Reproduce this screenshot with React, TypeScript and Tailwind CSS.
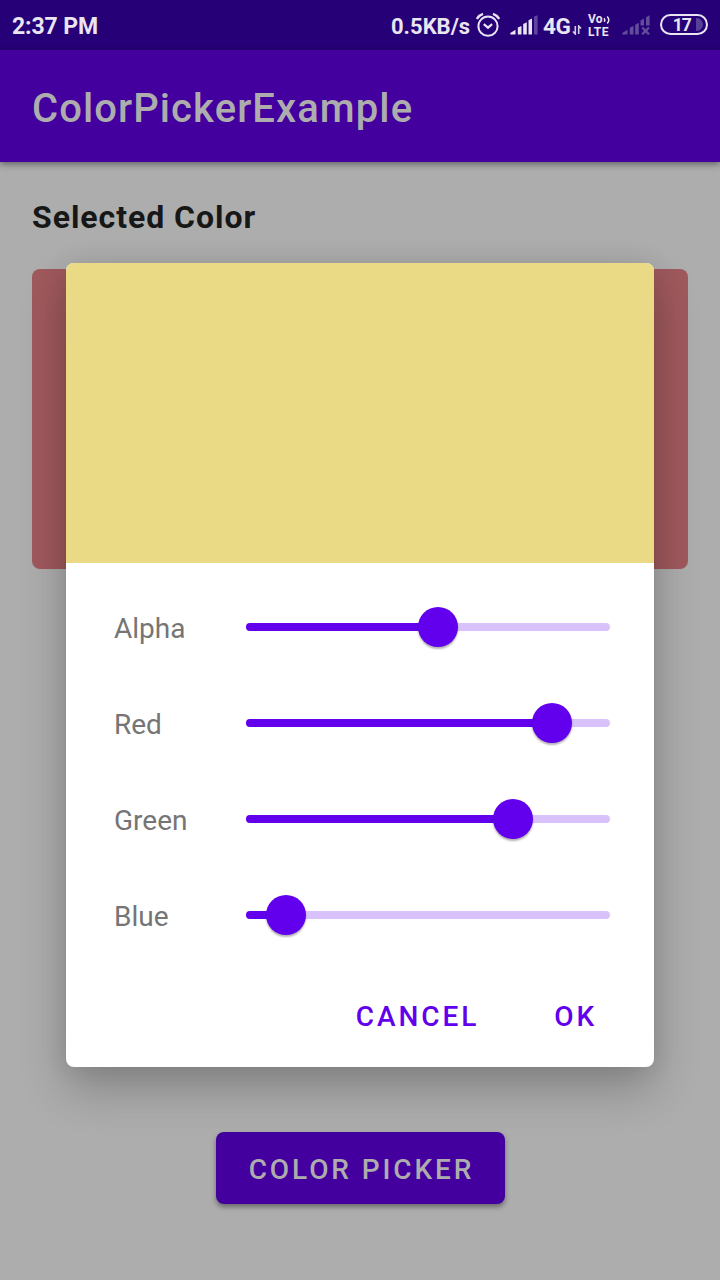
import React from "react";

type Channel = { label: string; value: number };

const channels: Channel[] = [
  { label: "Alpha", value: 192 },
  { label: "Red", value: 306 },
  { label: "Green", value: 267 },
  { label: "Blue", value: 40 },
];

function AlarmIcon() {
  return (
    <svg className="ml-[6px] h-[26px] w-[24px]" viewBox="0 0 24 26" fill="none" stroke="#e9e5f1">
      <circle cx="12" cy="14.2" r="9.6" strokeWidth="2" />
      <path d="M7.8 12.2 12 15.7l4.1-3.5" strokeWidth="2.2" />
      <path d="M.9 6.9Q3 3.2 7 1.9M23.1 6.9Q21 3.2 17 1.9" strokeWidth="2.4" />
    </svg>
  );
}

function SignalIcon() {
  return (
    <svg className="ml-[10px] h-[20px] w-[28px]" viewBox="0 0 28 20" fill="#e9e5f1">
      <path d="M.3 19.5v-1.4l5.2-3.4v4.8zM7.8 12.5l3.7-1.5v8.5H7.8zM13.2 9l3.6-1.7v12.2h-3.6zM18.5 5.2 22 3.6v15.9h-3.5z" />
      <path d="M24 1.5 27.6.2v19.3H24z" opacity=".3" />
    </svg>
  );
}

function NoSignalIcon() {
  return (
    <svg className="ml-[10px] h-[20px] w-[28px]" viewBox="0 0 28 20" fill="#634c9b">
      <path d="M.3 19.5v-1.4l5.2-3.4v4.8zM7.8 12.8l3.7-2v8.7H7.8zM13.2 9.8l3.6-2v11.7h-3.6zM18.5 5.6 22 3.5v7h-3.5zM24 2.2 27.6.2v10.3H24z" />
      <path d="m20.2 12.5 6.8 6.8m0-6.8-6.8 6.8" stroke="#634c9b" strokeWidth="2.4" />
    </svg>
  );
}

function StatusBar() {
  return (
    <header className="flex h-[50px] items-start justify-between bg-[#250077] pl-3 pr-[12px] text-[#e9e5f1]">
      <span className="mt-[13px] text-[23px] font-bold leading-[27px] tracking-[-0.1px]">2:37 PM</span>
      <div className="flex items-start">
        <span className="mt-[13px] w-[79px] whitespace-nowrap text-[22px] font-bold leading-[27px]">0.5KB/s</span>
        <div className="mt-[12px]"><AlarmIcon /></div>
        <div className="mt-[15px]"><SignalIcon /></div>
        <span className="ml-[5px] mt-[13px] w-[29px] text-[22.5px] font-bold leading-[27px] tracking-[-0.3px]">4G</span>
        <svg className="mt-[25px] h-[10px] w-[10px]" viewBox="0 0 10 10" fill="none" stroke="#d5cde5" strokeWidth="1.6">
          <path d="M3.3 1v8L1 6.5M6.7 9V1L9 3.5" />
        </svg>
        <div className="ml-[6px] mt-[13px] flex w-[24px] flex-col font-bold">
          <span className="flex h-[13px] items-center">
            <span className="text-[12px] leading-[13px] tracking-[0.2px]">Vo</span>
            <svg className="h-[10px] w-[8px]" viewBox="0 0 8 10" fill="none" stroke="#e9e5f1" strokeWidth="1.5">
              <path d="M1 3.2q1.6 1.8 0 3.6M4.2 1.4q3.2 3.6 0 7.2" />
            </svg>
          </span>
          <span className="h-[12px] text-[12px] leading-[12px] tracking-[0.6px]">LTE</span>
        </div>
        <div className="mt-[15px]"><NoSignalIcon /></div>
        <div className="ml-[10px] mt-[14px] flex h-[21px] w-[48px] items-center justify-end rounded-full border-2 border-[#e9e5f1] pr-[3px] text-[17.5px] font-bold leading-[17px]">
          <span className="mr-[5px] pt-px tracking-[-0.9px]">17</span>
          <span className="h-[13px] w-[7px] rounded-r-full bg-[#56409a]" />
        </div>
      </div>
    </header>
  );
}

function ChannelSlider({ label, value }: Channel) {
  return (
    <div className="flex h-24 items-center">
      <label className="w-[132px] pt-[4px] text-[28px] leading-[34px] text-[#757575]">{label}</label>
      <div className="relative h-2 w-[364px] rounded-full bg-[#d9c2fb]">
        <div className="h-2 rounded-l-full bg-[#6200ee]" style={{ width: value }} />
        <div
          className="absolute -top-4 h-10 w-10 -translate-x-1/2 rounded-full bg-[#6200ee] shadow-[0_2px_2px_rgba(0,0,0,0.3)]"
          style={{ left: value }}
        />
      </div>
    </div>
  );
}

function PickerDialog() {
  return (
    <div className="absolute left-[66px] top-[263px] flex h-[804px] w-[588px] flex-col rounded-lg bg-white shadow-[0_22px_46px_rgba(0,0,0,0.24),0_0_24px_rgba(0,0,0,0.08)]">
      <div className="h-[300px] shrink-0 rounded-t-lg bg-[#ead985]" />
      <div className="pl-12 pt-4">
        {channels.map((c) => (
          <ChannelSlider key={c.label} {...c} />
        ))}
      </div>
      <div className="mt-[36px] flex justify-end pr-[57px] text-[28px] font-medium leading-[36px] tracking-[2.9px] text-[#6200ee]">
        <button className="mr-[75px]">CANCEL</button>
        <button>OK</button>
      </div>
    </div>
  );
}

export default function App() {
  return (
    <div className="relative flex h-[1280px] w-[720px] flex-col overflow-hidden bg-[#adadad] font-['Roboto',sans-serif]">
      <StatusBar />
      <div className="flex h-[112px] items-center bg-[#43009f] px-8 pt-[5px] shadow-[0_2px_7px_rgba(0,0,0,0.45)]">
        <h1 className="text-[40px] font-medium leading-[48px] tracking-[1.08px] text-[#adadad]">ColorPickerExample</h1>
      </div>
      <main className="flex flex-1 flex-col px-8 pt-[35px]">
        <h2 className="text-[32px] font-bold leading-[40px] tracking-[0.96px] text-[#171717]">Selected Color</h2>
        <div className="mt-[32px] h-[300px] rounded-lg bg-[#9f595d]" />
        <button className="mb-[76px] mt-auto h-[72px] w-[289px] self-center rounded-lg bg-[#43009f] pl-[3px] pt-[4px] text-[28px] font-medium tracking-[2.9px] text-[#adadad] shadow-[0_3px_5px_rgba(0,0,0,0.38)]">
          COLOR PICKER
        </button>
      </main>
      <PickerDialog />
    </div>
  );
}
